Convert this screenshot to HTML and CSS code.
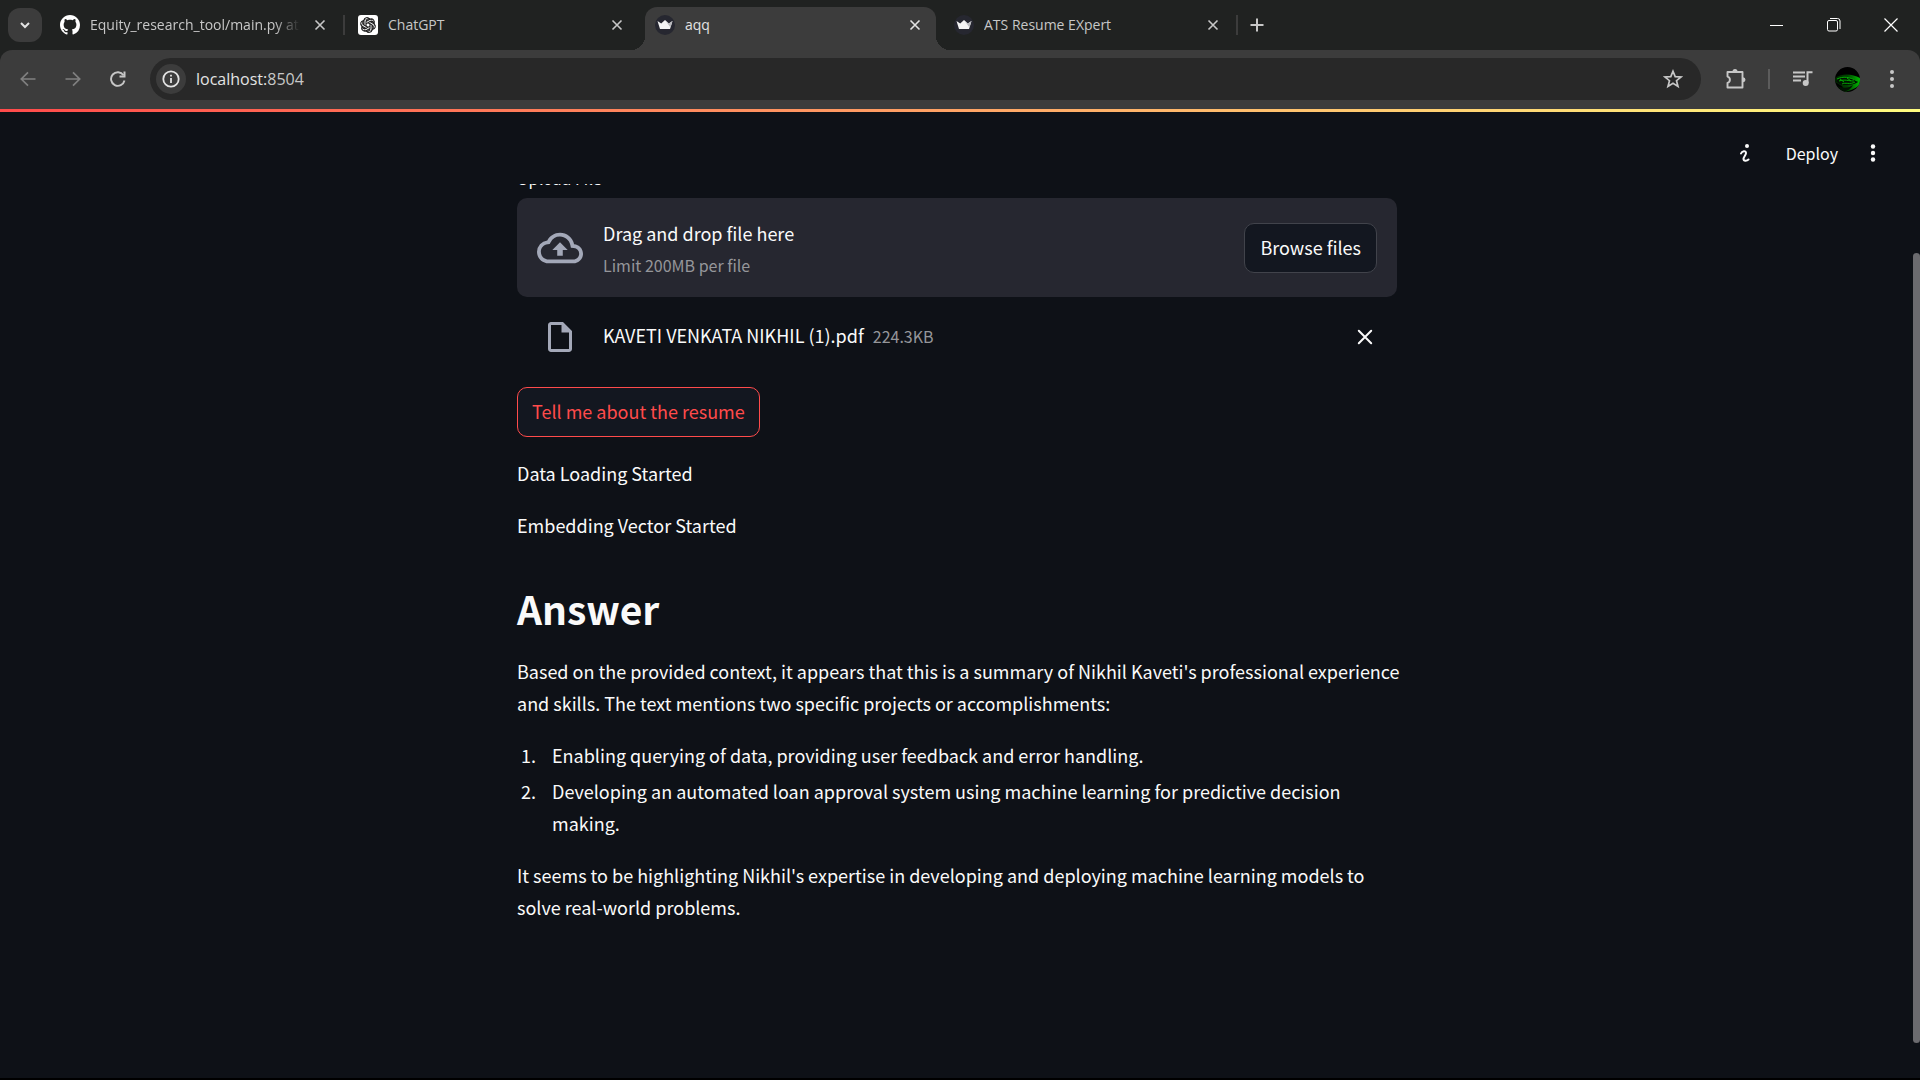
FILE: index.html
```html
<!DOCTYPE html>
<html lang="en">
<head>
<meta charset="utf-8">
<title>aqq</title>
<link rel="stylesheet" href="styles.css">
</head>
<body>
<div class="browser">
  <div class="tabstrip">
    <button class="tab-search" aria-label="Search tabs"><svg width="12" height="8" viewBox="0 0 12 8"><path d="M2 2l4 4 4-4" fill="none" stroke="#e3e3e3" stroke-width="2"/></svg></button>
    <nav class="tabs">
      <div class="tab tab-first">
        <svg class="favicon" viewBox="0 0 16 16"><path fill="#fff" d="M8 0C3.58 0 0 3.58 0 8c0 3.54 2.29 6.53 5.47 7.59.4.07.55-.17.55-.38 0-.19-.01-.82-.01-1.49-2.01.37-2.53-.49-2.69-.94-.09-.23-.48-.94-.82-1.13-.28-.15-.68-.52-.01-.53.63-.01 1.08.58 1.23.82.72 1.21 1.87.87 2.33.66.07-.52.28-.87.51-1.07-1.78-.2-3.64-.89-3.64-3.95 0-.87.31-1.59.82-2.15-.08-.2-.36-1.02.08-2.12 0 0 .67-.21 2.2.82.64-.18 1.32-.27 2-.27s1.36.09 2 .27c1.53-1.04 2.2-.82 2.2-.82.44 1.1.16 1.92.08 2.12.51.56.82 1.27.82 2.15 0 3.07-1.87 3.75-3.65 3.95.29.25.54.73.54 1.48 0 1.07-.01 1.93-.01 2.2 0 .21.15.46.55.38A8.01 8.01 0 0 0 16 8c0-4.42-3.58-8-8-8z"/></svg>
        <a class="tab-title" href="#">Equity_research_tool/main.py at main</a>
        <button class="tab-close" aria-label="Close tab"><svg width="12" height="12" viewBox="0 0 12 12"><path d="M1.500 1.500l9 9M10.500 1.500l-9 9" stroke="#c7c7c7" stroke-width="1.600"/></svg></button>
      </div>
      <span class="tab-divider"></span>
      <div class="tab tab-second">
        <svg class="favicon" viewBox="0 0 20 20"><rect width="20" height="20" rx="3" fill="#fff"/><g fill="none" stroke="#222" stroke-width="1.100"><path id="petal" d="M8 11.200V6.500a3 3 0 0 1 5.500-1.500M8 6.500l4-2.300a3 3 0 0 1 4 4"/><use href="#petal" transform="rotate(60 10 10)"/><use href="#petal" transform="rotate(120 10 10)"/><use href="#petal" transform="rotate(180 10 10)"/><use href="#petal" transform="rotate(240 10 10)"/><use href="#petal" transform="rotate(300 10 10)"/></g></svg>
        <a class="tab-title" href="#">ChatGPT</a>
        <button class="tab-close" aria-label="Close tab"><svg width="12" height="12" viewBox="0 0 12 12"><path d="M1.500 1.500l9 9M10.500 1.500l-9 9" stroke="#c7c7c7" stroke-width="1.600"/></svg></button>
      </div>
      <div class="tab tab-active">
        <svg class="favicon" viewBox="0 0 20 20"><circle cx="10" cy="10" r="10" fill="#262730"/><path d="M2.500 6l3.700 2.500L10 5l3.800 3.500L17.500 6l-2.500 8H5z" fill="#f4f4f4"/><path d="M10 5l3.800 3.500L17.500 6l-2 6.500z" fill="#b9b9bd"/></svg>
        <a class="tab-title" href="#">aqq</a>
        <button class="tab-close" aria-label="Close tab"><svg width="12" height="12" viewBox="0 0 12 12"><path d="M1.500 1.500l9 9M10.500 1.500l-9 9" stroke="#e3e3e3" stroke-width="1.600"/></svg></button>
      </div>
      <div class="tab tab-last">
        <svg class="favicon" viewBox="0 0 20 20"><circle cx="10" cy="10" r="10" fill="#262730"/><path d="M2.500 6l3.700 2.500L10 5l3.800 3.500L17.500 6l-2.500 8H5z" fill="#f4f4f4"/><path d="M10 5l3.800 3.500L17.500 6l-2 6.500z" fill="#b9b9bd"/></svg>
        <a class="tab-title" href="#">ATS Resume EXpert</a>
        <button class="tab-close" aria-label="Close tab"><svg width="12" height="12" viewBox="0 0 12 12"><path d="M1.500 1.500l9 9M10.500 1.500l-9 9" stroke="#c7c7c7" stroke-width="1.600"/></svg></button>
      </div>
      <span class="tab-divider"></span>
      <button class="new-tab" aria-label="New tab"><svg width="14" height="14" viewBox="0 0 14 14"><path d="M7 0.500v13M0.500 7h13" stroke="#c7c7c7" stroke-width="2"/></svg></button>
    </nav>
    <div class="window-controls">
      <button aria-label="Minimize"><svg width="14" height="14" viewBox="0 0 14 14"><path d="M0 7.500h13" stroke="#fff"/></svg></button>
      <button aria-label="Restore"><svg width="14" height="14" viewBox="0 0 14 14" fill="none" stroke="#fff"><rect x=".5" y="2.500" width="10" height="10.500" rx="1.500"/><path d="M3 .5h7.500a2.500 2.500 0 0 1 2.500 2.500V11"/></svg></button>
      <button aria-label="Close window"><svg width="14" height="14" viewBox="0 0 14 14"><path d="M.5.5l13 13M13.500.5l-13 13" stroke="#fff" stroke-width="1.200"/></svg></button>
    </div>
  </div>
  <div class="toolbar">
    <button class="tool" aria-label="Back"><svg width="16" height="16" viewBox="0 0 16 16"><path d="M15.500 8H1.500M8 1.300L1.300 8 8 14.700" fill="none" stroke="#808080" stroke-width="1.700"/></svg></button>
    <button class="tool" aria-label="Forward"><svg width="16" height="16" viewBox="0 0 16 16"><path d="M.5 8h14M8 1.300L14.700 8 8 14.700" fill="none" stroke="#808080" stroke-width="1.700"/></svg></button>
    <button class="tool" aria-label="Reload"><svg width="16" height="16" viewBox="0 0 16 16"><path d="M14.500 9.500A6.800 6.800 0 1 1 13.500 4.200" fill="none" stroke="#c7c7c7" stroke-width="1.900"/><path d="M15.500.5v6h-6V4.600h4V.5z" fill="#c7c7c7"/></svg></button>
    <div class="omnibox">
      <button class="site-info" aria-label="Site information"><svg width="18" height="18" viewBox="0 0 18 18"><circle cx="9" cy="9" r="7.700" fill="none" stroke="#e3e3e3" stroke-width="1.800"/><path d="M9 8v5M9 4.700v1.900" stroke="#e3e3e3" stroke-width="1.800"/></svg></button>
      <a class="url" href="#">localhost:<span class="port">8504</span></a>
      <button class="bookmark" aria-label="Bookmark"><svg width="20" height="20" viewBox="0 0 20 20"><path d="M10 2.200l2.200 5.400 5.800.4-4.500 3.700 1.500 5.700-5-3.100-5 3.100 1.500-5.700L2 8l5.800-.4z" fill="none" stroke="#c7c7c7" stroke-width="1.700"/></svg></button>
    </div>
    <button class="tool tool-ext" aria-label="Extensions"><svg width="22" height="22" viewBox="0 0 22 22"><path d="M2.500 4h15v15.500h-15V14.800a3.200 3.200 0 0 0 0-6.200z" fill="none" stroke="#c7c7c7" stroke-width="1.900" stroke-linejoin="round"/><path d="M7.500 3.500a2.500 2.500 0 0 1 5 0zM18 9.200a2.500 2.500 0 0 1 0 5z" fill="#c7c7c7"/></svg></button>
    <span class="tool-divider"></span>
    <button class="tool tool-media" aria-label="Media control"><svg width="20" height="16" viewBox="0 0 20 16"><path d="M0 1.500h12M0 5.500h12M0 9.500h8" stroke="#c7c7c7" stroke-width="1.800"/><path d="M14.500 12V1.200H19.500" fill="none" stroke="#c7c7c7" stroke-width="2"/><circle cx="12.700" cy="12" r="3" fill="#c7c7c7"/></svg></button>
    <button class="tool tool-avatar" aria-label="Profile"><svg width="25" height="25" viewBox="0 0 25 25"><defs><clipPath id="disc"><circle cx="12.500" cy="12.500" r="12.500"/></clipPath><linearGradient id="glow" x1="0" y1="0" x2="1" y2="0"><stop offset="0" stop-color="#020"/><stop offset=".5" stop-color="#040"/><stop offset="1" stop-color="#0b0"/></linearGradient></defs><g clip-path="url(#disc)"><path d="M0 0h25v25H0z" fill="#000"/><path d="M0 11C8 6 17 7 25 11v7C19 22 14 24 10 25l-3-6L0 15z" fill="url(#glow)"/><path d="M1 14c4-5 15-5 22 1-4 3-10 3-14 3-4 0-6-2-8-4zM0 18c8 4 14 3 18 0-2 4-6 6-10 7z" fill="#010"/><path d="M2 12c6-3 13-2 20 2M4 14c6-2 9 0 15 0M7 17c3-2 8 1 13-2M5 12l4 3M12 11l4 3" fill="none" stroke="#0a0"/></g></svg></button>
    <button class="tool tool-menu" aria-label="Browser menu"><svg width="4" height="18" viewBox="0 0 4 18" fill="#c7c7c7"><circle cx="2" cy="2" r="2"/><circle cx="2" cy="9" r="2"/><circle cx="2" cy="16" r="2"/></svg></button>
  </div>
</div>
<div class="app">
  <div class="decoration"></div>
  <header class="app-header">
    <button class="info-btn" aria-label="Info"><svg width="10" height="18" viewBox="0 0 10 18"><circle cx="7" cy="2" r="2" fill="#fafafa"/><path d="M1 9.500C2 7 6 6.200 6 9c0 2-2.500 4-2.500 6 0 2.200 3.500 2 5 .5" fill="none" stroke="#fafafa" stroke-width="2" stroke-linecap="round"/></svg></button>
    <button class="deploy">Deploy</button>
    <button class="menu-btn" aria-label="Main menu"><svg width="6" height="18" viewBox="0 0 6 18" fill="#fafafa"><circle cx="3" cy="2.500" r="2.200"/><circle cx="3" cy="9" r="2.200"/><circle cx="3" cy="15.500" r="2.200"/></svg></button>
  </header>
  <main class="main">
    <div class="block">
      <label class="upload-label" for="browse">Upload File</label>
      <section class="dropzone">
        <svg class="cloud" width="46" height="46" viewBox="0 0 24 24"><path fill="#a3a8b8" d="M19.350 10.040A7.490 7.490 0 0 0 12 4C9.110 4 6.600 5.640 5.350 8.040A5.994 5.994 0 0 0 0 14c0 3.310 2.690 6 6 6h13c2.760 0 5-2.240 5-5 0-2.640-2.050-4.780-4.650-4.960zM19 18H6c-2.210 0-4-1.790-4-4 0-2.050 1.530-3.760 3.560-3.970l1.070-.11.5-.95A5.469 5.469 0 0 1 12 6c2.620 0 4.880 1.860 5.390 4.430l.3 1.500 1.530.11A2.980 2.980 0 0 1 22 15c0 1.650-1.350 3-3 3zM8 13h2.550v3h2.900v-3H16l-4-4z"/></svg>
        <div class="drop-text"><span>Drag and drop file here</span><small>Limit 200MB per file</small></div>
        <button class="btn" id="browse">Browse files</button>
      </section>
      <div class="file-row">
        <svg class="file-icon" width="36" height="36" viewBox="0 0 24 24"><path fill="#a3a8b8" d="M14 2H6c-1.100 0-2 .9-2 2v16c0 1.100.9 2 2 2h12c1.100 0 2-.9 2-2V8zM18 20H6V4h7v5h5z"/></svg>
        <div class="file-text"><span>KAVETI VENKATA NIKHIL (1).pdf</span><small>224.3KB</small></div>
        <button class="remove" aria-label="Remove file"><svg width="16" height="16" viewBox="0 0 16 16"><path d="M1.800 1.800l12.400 12.400M14.200 1.800L1.800 14.200" stroke="#fafafa" stroke-width="2" stroke-linecap="round"/></svg></button>
      </div>
      <button class="btn btn-focus">Tell me about the resume</button>
      <p>Data Loading Started</p>
      <p>Embedding Vector Started</p>
      <h2>Answer</h2>
      <div class="answer">
        <p>Based on the provided context, it appears that this is a summary of Nikhil Kaveti's professional experience and skills. The text mentions two specific projects or accomplishments:</p>
        <ol>
          <li>Enabling querying of data, providing user feedback and error handling.</li>
          <li>Developing an automated loan approval system using machine learning for predictive decision making.</li>
        </ol>
        <p>It seems to be highlighting Nikhil's expertise in developing and deploying machine learning models to solve real-world problems.</p>
      </div>
    </div>
  </main>
  <div class="scroll-thumb"></div>
</div>
</body>
</html>
```

FILE: styles.css
```css
* { box-sizing: border-box; }
body {
  margin: 0;
  height: 100vh;
  display: flex;
  flex-direction: column;
  overflow: hidden;
  background: #0e1117;
  border-bottom: 2px solid #000;
}
button {
  margin: 0;
  padding: 0;
  border: 0;
  background: none;
  color: inherit;
  font: inherit;
  display: flex;
  align-items: center;
  justify-content: center;
  flex: none;
}
a { color: inherit; text-decoration: none; }
svg { display: block; flex: none; }

/* Browser frame */
.browser { flex: none; background: #202221; font-family: "Open Sans", "Noto Sans", sans-serif; }
.tabstrip { height: 50px; display: flex; }
.tab-search {
  width: 34px;
  height: 34px;
  margin: 8px 10px 0 8px;
  border-radius: 12px;
  background: #3c3c3c;
}
.tabs { display: flex; align-items: center; flex: 1; min-width: 0; }
.tab {
  position: relative;
  width: 300px;
  height: 43px;
  margin-top: 7px;
  padding: 0 13px 8px;
  display: flex;
  align-items: center;
  gap: 10px;
  color: #c7c7c7;
}
.tab-first { width: 291px; padding-left: 8px; }
.tab-second { padding-right: 18px; }
.tab-last { padding-left: 18px; }
.tab-active { width: 291px; padding: 0 11px 8px 10px; background: #3c3c3c; border-radius: 12px 12px 0 0; color: #e3e3e3; }
.tab-active::before, .tab-active::after {
  content: "";
  position: absolute;
  bottom: 0;
  width: 14px;
  height: 14px;
}
.tab-active::before { right: 100%; background: radial-gradient(circle at 0 0, transparent 14px, #3c3c3c 14px); }
.tab-active::after { left: 100%; background: radial-gradient(circle at 100% 0, transparent 14px, #3c3c3c 14px); }
.favicon { width: 20px; height: 20px; }
.tab-title {
  flex: 1;
  font-size: 14px;
  line-height: 20px;
  padding-top: 1px;
  white-space: nowrap;
  overflow: hidden;
}
.tab-first .tab-title {
  -webkit-mask-image: linear-gradient(90deg, #000 88%, transparent);
  mask-image: linear-gradient(90deg, #000 88%, transparent);
}
.tab-close { width: 20px; height: 20px; }
.tab-divider { width: 2px; height: 20px; background: #3c3c3c; }
.new-tab { width: 34px; height: 34px; margin-left: 2px; }
.window-controls { display: flex; margin-right: 1px; }
.window-controls button { width: 57px; }

.toolbar {
  height: 59px;
  padding: 0 8px 1px;
  display: flex;
  align-items: center;
  background: #3c3c3c;
  border-radius: 12px 12px 0 0;
}
.tool { width: 40px; height: 40px; margin-right: 5px; }
.omnibox {
  flex: 1;
  height: 42px;
  margin-left: 7px;
  padding: 0 18px 0 6px;
  display: flex;
  align-items: center;
  border-radius: 21px;
  background: #282828;
}
.site-info { width: 30px; height: 30px; border-radius: 15px; background: #3c3c3c; }
.url { flex: 1; margin-left: 10px; font-size: 16px; line-height: 24px; color: #e3e3e3; }
.port { color: #c7c7c7; }
.tool-ext { margin: 0 12px 0 15px; }
.tool-divider { width: 2px; height: 20px; background: #5c5c5c; }
.tool-media { margin: 0 4px 0 13px; }
.tool-menu { margin: 0; }

/* Page */
.app {
  position: relative;
  flex: 1;
  min-height: 0;
  display: flex;
  flex-direction: column;
  color: #fafafa;
  font-family: "Noto Sans CJK SC", "Noto Sans CJK JP", sans-serif;
  font-size: 18px;
  line-height: 32px;
}
.decoration { height: 3px; background: linear-gradient(90deg, #ff4b4b, #fffd80); }
.app-header {
  height: 72px;
  padding: 10px 30px 0 0;
  display: flex;
  align-items: center;
  justify-content: flex-end;
}
.info-btn { width: 36px; margin-right: 13px; }
.deploy { padding: 0 10px; font-size: 16px; line-height: 24px; }
.menu-btn { width: 34px; height: 34px; margin-left: 8px; }
.main { flex: 1; min-height: 0; padding-right: 6px; overflow: hidden; }
.block { width: 880px; max-width: 100%; margin: 0 auto; }

/* The label is scrolled most of the way under the header */
.upload-label {
  display: block;
  height: 24px;
  margin: -18px 0 8px;
  font-size: 16px;
  line-height: 24px;
}
.dropzone {
  padding: 20px;
  display: flex;
  align-items: center;
  background: #262730;
  border-radius: 10px;
}
.drop-text {
  flex: 1;
  display: flex;
  flex-direction: column;
  gap: 5px;
  margin-left: 20px;
  line-height: 30px;
}
small { font-size: 16px; line-height: 24px; color: #95969a; }
.btn {
  height: 50px;
  padding: 0 15px 2px;
  border: 1px solid #41434b;
  border-radius: 10px;
  background: #131720;
}
.file-row { height: 80px; padding: 0 20px 0 25px; display: flex; align-items: center; }
.file-text { flex: 1; display: flex; align-items: baseline; gap: 9px; margin-left: 25px; padding-bottom: 4px; }
.remove { width: 24px; height: 24px; }
.btn-focus { margin: 10px 0 20px; padding: 0 14px 2px; border-color: #ff4b4b; color: #ff4b4b; }
p { margin: 0 0 20px; }
h2 { margin: 0; padding: 20px 0; font-size: 39px; line-height: 54px; font-weight: 700; }
.answer { margin-right: -6px; }
ol { margin: 0 0 20px; padding: 0; }
li { margin: 0 0 4px 23px; padding-left: 12px; }
li:last-child { margin-bottom: 0; }
.scroll-thumb {
  position: absolute;
  right: 0;
  top: 144px;
  bottom: 35px;
  width: 7px;
  border-radius: 4px;
  background: #6b6b6f;
}
```
